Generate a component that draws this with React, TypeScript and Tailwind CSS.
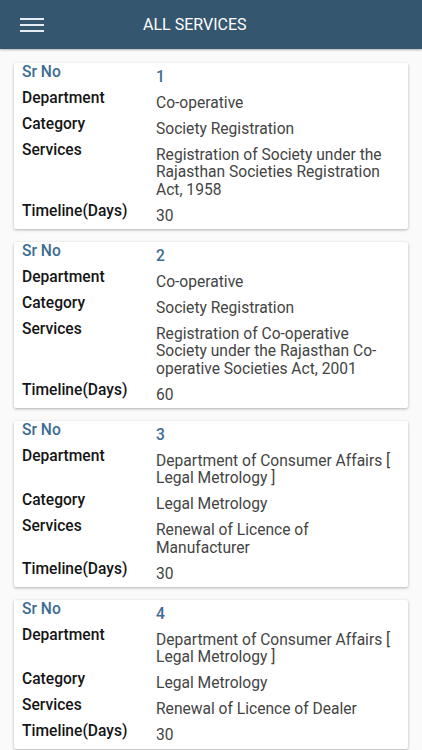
import React from "react";

interface Service {
  sr: number;
  department: string;
  category: string;
  service: string;
  days: number;
}

const services: Service[] = [
  {
    sr: 1,
    department: "Co-operative",
    category: "Society Registration",
    service: "Registration of Society under the Rajasthan Societies Registration Act, 1958",
    days: 30,
  },
  {
    sr: 2,
    department: "Co-operative",
    category: "Society Registration",
    service: "Registration of Co-operative Society under the Rajasthan Co-operative Societies Act, 2001",
    days: 60,
  },
  {
    sr: 3,
    department: "Department of Consumer Affairs [ Legal Metrology ]",
    category: "Legal Metrology",
    service: "Renewal of Licence of Manufacturer",
    days: 30,
  },
  {
    sr: 4,
    department: "Department of Consumer Affairs [ Legal Metrology ]",
    category: "Legal Metrology",
    service: "Renewal of Licence of Dealer",
    days: 30,
  },
];

function Row({ label, value, accent }: { label: string; value: React.ReactNode; accent?: boolean }) {
  return (
    <div className="flex">
      <div
        className={`w-[134px] shrink-0 text-[15.6px] leading-[18px] font-medium ${
          accent ? "text-[#3c6c93]" : "text-[#151515]"
        }`}
      >
        {label}
      </div>
      <div
        className={`mt-[5.5px] flex-1 pr-[12px] text-[15.6px] leading-[17.5px] ${
          accent ? "font-medium text-[#3c6c93]" : "text-[#444444]"
        }`}
      >
        {value}
      </div>
    </div>
  );
}

export default function App() {
  return (
    <div className="min-h-[750px] w-[422px] bg-[#fafafa] font-['Roboto',sans-serif]">
      <header className="flex h-[49px] items-center bg-[#34566f] shadow-[0_1px_2px_rgba(0,0,0,0.3)]">
        <button className="ml-[20px] flex w-[24px] flex-col gap-[4px]">
          <span className="h-[2px] w-full bg-[#e6ecf1]" />
          <span className="h-[2px] w-full bg-[#e6ecf1]" />
          <span className="h-[2px] w-full bg-[#e6ecf1]" />
        </button>
        <h1 className="ml-[99px] text-[16px] text-white">ALL SERVICES</h1>
      </header>
      <div className="flex flex-col gap-[13px] px-[14px] pt-[14px] pb-4">
        {services.map((s) => (
          <div
            key={s.sr}
            className="flex flex-col gap-[3px] rounded-[2px] bg-white pt-0 pb-[4px] pl-[8px] shadow-[0_1px_3px_rgba(0,0,0,0.3)]"
          >
            <Row label="Sr No" value={s.sr} accent />
            <Row label="Department" value={s.department} />
            <Row label="Category" value={s.category} />
            <Row label="Services" value={s.service} />
            <Row label="Timeline(Days)" value={s.days} />
          </div>
        ))}
      </div>
    </div>
  );
}
